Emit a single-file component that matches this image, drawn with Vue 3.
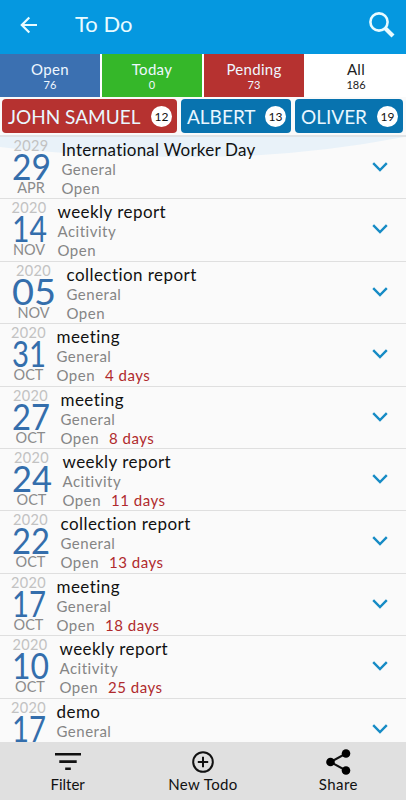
<template>
  <div class="todo-page">
    <header class="app-bar">
      <svg class="back-icon" viewBox="0 0 18 18">
        <path d="M17 9H2M9.3 1.5L1.8 9l7.5 7.5" />
      </svg>
      <h1 class="app-title">To Do</h1>
      <svg class="search-icon" viewBox="0 0 26 26">
        <circle cx="10" cy="10" r="8.6" />
        <path class="handle" d="M16.2 16.2L24 24" />
      </svg>
    </header>

    <nav class="tabs">
      <div v-for="tab in tabs" :key="tab.label" class="tab" :class="tab.type">
        <span class="tab-label">{{ tab.label }}</span>
        <span class="tab-count">{{ tab.count }}</span>
      </div>
    </nav>

    <div class="people">
      <div v-for="p in people" :key="p.name" class="person" :class="p.type">
        <span class="person-name">{{ p.name }}</span>
        <span class="person-count">{{ p.count }}</span>
      </div>
    </div>

    <main class="list">
      <svg class="wave" viewBox="0 0 406 22">
        <path d="M0 0H404Q300 20 195 20Q80 20 0 10Z" />
      </svg>
      <div v-for="(item, index) in items" :key="index" class="row">
        <div class="date" :style="{ width: item.width + 5 + 'px' }">
          <span class="year">{{ item.year }}</span>
          <svg class="day" :width="item.width" height="28">
            <text x="0" y="26.5" :textLength="item.width" lengthAdjust="spacingAndGlyphs">{{ item.day }}</text>
          </svg>
          <span class="month">{{ item.month }}</span>
        </div>
        <div class="info">
          <span class="title" :class="{ long: item.title.length > 20 }">{{ item.title }}</span>
          <span class="category">{{ item.category }}</span>
          <span class="status">Open<span v-if="item.late" class="late">{{ item.late }} days</span></span>
        </div>
        <svg class="chevron" viewBox="0 0 16 10">
          <path d="M1.2 1.2L8 8l6.8-6.8" />
        </svg>
      </div>
    </main>

    <footer class="bottom-bar">
      <div class="action">
        <svg class="action-icon" viewBox="0 0 28 28">
          <path class="filter" d="M1 5.2h26M5.3 12.6h17.4M11.2 19.8h5.6" />
        </svg>
        <span class="action-label">Filter</span>
      </div>
      <div class="action">
        <svg class="action-icon" viewBox="0 0 28 28">
          <circle class="line" cx="14" cy="13" r="9.8" />
          <path class="line" d="M14 7.8v10.4M8.8 13h10.4" />
        </svg>
        <span class="action-label new-label">New Todo</span>
      </div>
      <div class="action">
        <svg class="action-icon" viewBox="0 0 28 28">
          <path class="line" d="M22 4.5L6.5 13 22 21.5" />
          <circle cx="22" cy="4.5" r="4.3" />
          <circle cx="6.5" cy="13" r="4.3" />
          <circle cx="22" cy="21.5" r="4.3" />
        </svg>
        <span class="action-label share-label">Share</span>
      </div>
    </footer>
  </div>
</template>

<script setup>
const tabs = [
  { label: 'Open', count: 76, type: 'open' },
  { label: 'Today', count: 0, type: 'today' },
  { label: 'Pending', count: 73, type: 'pending' },
  { label: 'All', count: 186, type: 'all' }
]

const people = [
  { name: 'JOHN SAMUEL', count: 12, type: 'john' },
  { name: 'ALBERT', count: 13, type: 'albert' },
  { name: 'OLIVER', count: 19, type: 'oliver' }
]

// width is the drawn width of the day number
const items = [
  { year: 2029, day: '29', month: 'APR', width: 39, title: 'International Worker Day', category: 'General' },
  { year: 2020, day: '14', month: 'NOV', width: 35, title: 'weekly report', category: 'Acitivity' },
  { year: 2020, day: '05', month: 'NOV', width: 44, title: 'collection report', category: 'General' },
  { year: 2020, day: '31', month: 'OCT', width: 34, title: 'meeting', category: 'General', late: 4 },
  { year: 2020, day: '27', month: 'OCT', width: 38, title: 'meeting', category: 'General', late: 8 },
  { year: 2020, day: '24', month: 'OCT', width: 40, title: 'weekly report', category: 'Acitivity', late: 11 },
  { year: 2020, day: '22', month: 'OCT', width: 38, title: 'collection report', category: 'General', late: 13 },
  { year: 2020, day: '17', month: 'OCT', width: 34, title: 'meeting', category: 'General', late: 18 },
  { year: 2020, day: '10', month: 'OCT', width: 37, title: 'weekly report', category: 'Acitivity', late: 25 },
  { year: 2020, day: '17', month: 'OCT', width: 34, title: 'demo', category: 'General' }
]
</script>

<style>
body {
  margin: 0;
}
</style>

<style scoped>
.todo-page {
  display: flex;
  flex-direction: column;
  width: 406px;
  height: 800px;
  overflow: hidden;
  background: #fafafa;
  font-family: Lato, "Liberation Sans", sans-serif;
  color: #111;
}

.app-bar {
  display: flex;
  align-items: center;
  flex: none;
  height: 54px;
  box-sizing: border-box;
  padding: 0 11px 4px 20px;
  background: #0598e0;
  color: #e9fbff;
}

.back-icon {
  width: 18px;
  height: 18px;
  fill: none;
  stroke: #e9fbff;
  stroke-width: 2.2;
}

.app-title {
  flex: 1;
  margin: 0 0 0 37px;
  font-size: 22px;
  font-weight: 400;
  line-height: 26px;
  padding-bottom: 2px;
  letter-spacing: 0;
}

.search-icon {
  width: 26px;
  height: 26px;
  fill: none;
  stroke: #e9fbff;
  stroke-width: 2.6;
}

.handle {
  stroke-width: 4.2;
}

.tabs {
  display: flex;
  flex: none;
  gap: 2px;
  height: 43px;
  background: #fff;
}

.tab {
  display: flex;
  flex: 1;
  flex-direction: column;
  align-items: center;
  box-sizing: border-box;
  padding-top: 6px;
  color: #eef7ff;
}

.tab.open {
  background: #3b70b1;
}

.tab.today {
  background: #35b729;
}

.tab.pending {
  background: #b63230;
}

.tab.all {
  background: #fff;
  color: #222;
}

.tab-label {
  font-size: 15px;
  line-height: 18px;
  letter-spacing: 0.3px;
}

.tab-count {
  font-size: 11px;
  line-height: 14px;
}

.people {
  display: flex;
  flex: none;
  gap: 4px;
  height: 38px;
  padding: 2px 3px 0 2px;
  box-sizing: border-box;
  background: #fafafa;
}

.person {
  display: flex;
  align-items: center;
  justify-content: space-between;
  box-sizing: border-box;
  height: 34px;
  padding: 0 5px 0 6px;
  border-radius: 4px;
  background: #0873af;
  color: #e9f7ff;
}

.person.john {
  width: 175px;
  background: #b63230;
}

.person.albert {
  width: 110px;
}

.person.oliver {
  width: 108px;
}

.person-name {
  font-size: 19px;
  white-space: nowrap;
}

.person-count {
  width: 21px;
  height: 21px;
  border-radius: 50%;
  background: #fff;
  color: #111;
  font-size: 12px;
  line-height: 21px;
  text-align: center;
}

.list {
  position: relative;
  flex: 1;
  min-height: 0;
  overflow: hidden;
  border-top: 2px solid #e0e3e6;
}

.wave {
  position: absolute;
  top: 0;
  left: 0;
  width: 406px;
  height: 22px;
  fill: #e9f2f9;
}

.row {
  position: relative;
  display: flex;
  height: 62.4px;
  box-sizing: border-box;
  padding-left: 9px;
  border-bottom: 1.5px solid #dfdfdf;
}

.date {
  display: flex;
  flex: none;
  flex-direction: column;
  align-items: center;
  padding-top: 1px;
  margin-right: 8.5px;
}

.year {
  color: #c2c2c2;
  font-size: 14.5px;
  line-height: 15px;
  letter-spacing: 0.3px;
}

.day {
  flex: none;
  overflow: visible;
  font-size: 36px;
  fill: #346eac;
}

.month {
  color: #8b8b8b;
  font-size: 14.5px;
  line-height: 14px;
}

.info {
  display: flex;
  flex: 1;
  flex-direction: column;
  padding-top: 3px;
  white-space: nowrap;
}

.title {
  font-size: 17px;
  line-height: 20px;
  letter-spacing: 0.45px;
}

.title.long {
  letter-spacing: 0.23px;
}

.category,
.status {
  color: #858585;
  font-size: 15px;
  line-height: 19px;
  letter-spacing: 0.5px;
}

.late {
  margin-left: 10px;
  color: #b02a2d;
}

.chevron {
  width: 16px;
  height: 10px;
  margin: 25px 18px 0 0;
  fill: none;
  stroke: #168bc5;
  stroke-width: 2.4;
}

.bottom-bar {
  display: flex;
  flex: none;
  height: 58px;
  background: #e0e0e0;
}

.action {
  display: flex;
  flex: 1;
  flex-direction: column;
  align-items: center;
  padding-top: 7px;
}

.action-icon {
  width: 28px;
  height: 28px;
  overflow: visible;
}

.filter,
.line {
  fill: none;
  stroke: #111;
  stroke-width: 2.6;
}

.line {
  stroke-width: 2;
}

.action-label {
  font-size: 15px;
  line-height: 15px;
}

.new-label {
  letter-spacing: 0.4px;
}

.share-label {
  letter-spacing: 0.4px;
}
</style>
